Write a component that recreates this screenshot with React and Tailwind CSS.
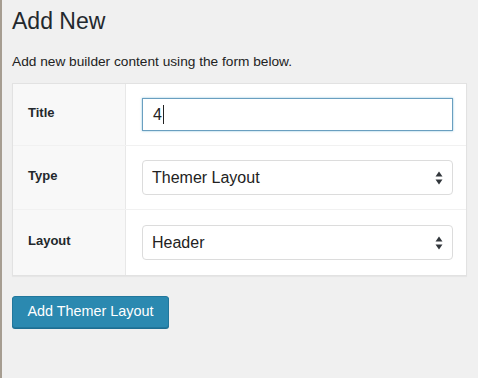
import React from "react";

const SelectArrows = () => (
  <svg width="8" height="14" viewBox="0 0 8 14" className="shrink-0">
    <path d="M4 0.5 L7.5 5.5 L0.5 5.5 Z" fill="#32373c" />
    <path d="M4 13.5 L7.5 8.5 L0.5 8.5 Z" fill="#32373c" />
  </svg>
);

const FakeSelect = ({ value }) => (
  <div className="flex h-[35px] w-full items-center justify-between rounded-[4px] border border-[#dcdcdc] bg-white pl-[9px] pr-[9px] text-[16px] text-[#222]">
    <span>{value}</span>
    <SelectArrows />
  </div>
);

const App = () => {
  const rows = [
    { label: "Title", h: "h-[62px]" },
    { label: "Type", h: "h-[64px]" },
    { label: "Layout", h: "h-[65px]" },
  ];

  return (
    <div
      className="min-h-screen w-[478px] h-[378px] border-l-[2px] border-[#a69d91] bg-[#f0f0f0] pl-[10px] pr-[11px] text-[#23282d]"
      style={{ fontFamily: '"Liberation Sans", Arial, sans-serif' }}
    >
      <h1 className="pt-[7px] text-[23px] leading-[28px] font-normal">Add New</h1>
      <p className="mt-[18px] text-[13.7px] leading-[18px] text-[#222]">
        Add new builder content using the form below.
      </p>

      {/* Form table */}
      <div className="mt-[12px] w-[455px] border border-[#e2e2e2] bg-white shadow-[0_1px_1px_rgba(0,0,0,0.04)]">
        {rows.map((row, i) => (
          <div
            key={row.label}
            className={`flex ${row.h} ${i < rows.length - 1 ? "border-b border-[#f1f1f1]" : ""}`}
          >
            <div className="flex w-[113px] items-center border-r border-[#e8e8e8] bg-[#f8f8f8] pl-[15px] pb-[3px] text-[13px] font-bold text-[#23282d]">
              {row.label}
            </div>
            <div className="flex flex-1 items-center pl-[16px] pr-[13px]">
              {i === 0 && (
                <div className="flex h-[33px] w-full items-center border border-[#6a9fc0] bg-white pl-[10px] text-[16px] text-[#222] shadow-[0_0_2px_rgba(30,140,190,0.5)]">
                  <span>4</span>
                  <span className="ml-[1px] h-[19px] w-[1px] bg-[#222]" />
                </div>
              )}
              {i === 1 && <FakeSelect value="Themer Layout" />}
              {i === 2 && <FakeSelect value="Header" />}
            </div>
          </div>
        ))}
      </div>

      <button className="mt-[20px] flex h-[32px] w-[157px] items-center justify-center rounded-[3px] border border-[#22779c] bg-[#2b89b0] text-[14.4px] text-white shadow-[0_1px_0_#1d6e92]">
        Add Themer Layout
      </button>
    </div>
  );
};

export default App;
